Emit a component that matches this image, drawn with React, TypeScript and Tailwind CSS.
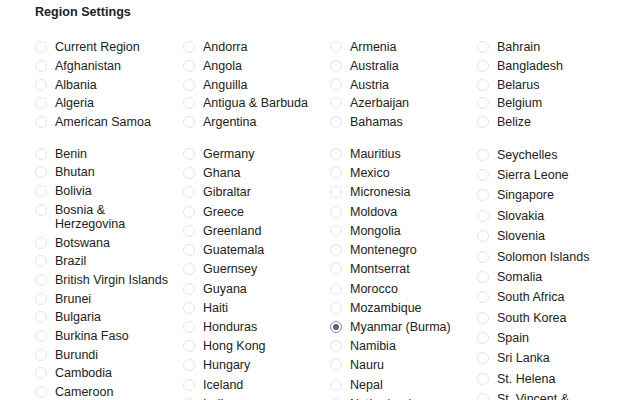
import React from 'react';

type Col = { items: string[]; pad: string };

const top: string[][] = [
  ['Current Region', 'Afghanistan', 'Albania', 'Algeria', 'American Samoa'],
  ['Andorra', 'Angola', 'Anguilla', 'Antigua & Barbuda', 'Argentina'],
  ['Armenia', 'Australia', 'Austria', 'Azerbaijan', 'Bahamas'],
  ['Bahrain', 'Bangladesh', 'Belarus', 'Belgium', 'Belize'],
];

const bottom: Col[] = [
  {
    pad: 'py-[2.35px]',
    items: [
      'Benin', 'Bhutan', 'Bolivia', 'Bosnia & Herzegovina', 'Botswana', 'Brazil',
      'British Virgin Islands', 'Brunei', 'Bulgaria', 'Burkina Faso', 'Burundi',
      'Cambodia', 'Cameroon', 'Canada', 'Cape Verde',
    ],
  },
  {
    pad: 'py-[2.62px]',
    items: [
      'Germany', 'Ghana', 'Gibraltar', 'Greece', 'Greenland', 'Guatemala', 'Guernsey',
      'Guyana', 'Haiti', 'Honduras', 'Hong Kong', 'Hungary', 'Iceland', 'India', 'Indonesia',
    ],
  },
  {
    pad: 'py-[2.62px]',
    items: [
      'Mauritius', 'Mexico', 'Micronesia', 'Moldova', 'Mongolia', 'Montenegro', 'Montserrat',
      'Morocco', 'Mozambique', 'Myanmar (Burma)', 'Namibia', 'Nauru', 'Nepal', 'Netherlands',
      'New Caledonia',
    ],
  },
  {
    pad: 'py-[3.2px]',
    items: [
      'Seychelles', 'Sierra Leone', 'Singapore', 'Slovakia', 'Slovenia', 'Solomon Islands',
      'Somalia', 'South Africa', 'South Korea', 'Spain', 'Sri Lanka', 'St. Helena',
      'St. Vincent & Grenadines', 'Suriname',
    ],
  },
];

const Radio: React.FC<{ checked?: boolean }> = ({ checked }) => (
  <span
    className={
      checked
        ? 'mt-[1px] flex h-[12px] w-[12px] shrink-0 items-center justify-center rounded-full border border-[#7f7fe0] bg-white'
        : 'mt-[1px] h-[12px] w-[12px] shrink-0 rounded-full border border-[#e4e4e4] bg-white'
    }
  >
    {checked && <span className="h-[6px] w-[6px] rounded-full bg-[#5f6368]" />}
  </span>
);

const Option: React.FC<{ label: string; pad: string }> = ({ label, pad }) => (
  <div className={`flex items-start gap-[8px] ${pad}`}>
    <Radio checked={label === 'Myanmar (Burma)'} />
    <span className="w-[118px] leading-[14px]">{label}</span>
  </div>
);

const widths = ['w-[148px]', 'w-[147px]', 'w-[147px]', 'w-[140px]'];

export default function App() {
  return (
    <div className="h-[400px] w-[617px] overflow-hidden bg-white pl-[35px] pt-[4px] font-['Liberation_Sans',Arial,sans-serif] text-[12.5px] text-[#222]">
      <h2 className="text-[12.6px] font-bold leading-[16px]">Region Settings</h2>

      <div className="mt-[18px] flex">
        {top.map((col, i) => (
          <div key={i} className={`${widths[i]} shrink-0`}>
            {col.map((c) => (
              <Option key={c} label={c} pad="py-[2.35px]" />
            ))}
          </div>
        ))}
      </div>

      <div className="mt-[13px] flex">
        {bottom.map((col, i) => (
          <div key={i} className={`${widths[i]} shrink-0`}>
            {col.items.map((c) => (
              <Option key={c} label={c} pad={col.pad} />
            ))}
          </div>
        ))}
      </div>
    </div>
  );
}
